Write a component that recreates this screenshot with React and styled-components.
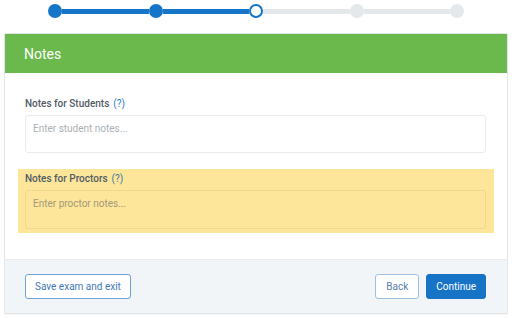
import React from "react";
import styled, { createGlobalStyle } from "styled-components";

const Global = createGlobalStyle`
  html, body { margin: 0; padding: 0; background: #ffffff; }
  body { font-family: Roboto, "Liberation Sans", Arial, sans-serif; }
  * { box-sizing: border-box; }
`;

const Page = styled.div`
  width: 512px;
  height: 318px;
  overflow: hidden;
  padding: 4px 4px 0 4px;
`;

const Stepper = styled.div`
  display: flex;
  align-items: center;
  margin: 0 0 0 44px;
  width: 416px;
  height: 14px;
`;

const Dot = styled.div`
  width: 14px;
  height: 14px;
  flex: none;
  border-radius: 50%;
  background: ${(p) => (p.$state === "done" ? "#1575c8" : p.$state === "current" ? "#ffffff" : "#e4e8eb")};
  border: ${(p) => (p.$state === "current" ? "2px solid #1575c8" : "none")};
`;

const Line = styled.div`
  flex: 1;
  height: 5px;
  background: ${(p) => (p.$done ? "#1575c8" : "#e4e8eb")};
`;

const Card = styled.div`
  margin-top: 15px;
  width: 504px;
  border: 1px solid #e3e6e8;
  border-radius: 2px;
  background: #fff;
  box-shadow: 0 1px 1px rgba(0, 0, 0, 0.04);
`;

const Header = styled.div`
  height: 39px;
  background: #6bb94c;
  color: #fff;
  font-size: 14px;
  display: flex;
  align-items: center;
  padding-left: 19px;
`;

const Body = styled.div`
  padding: 21px 21px 26px 20px;
  display: flex;
  flex-direction: column;
  gap: 12px;
`;

const FieldGroup = styled.div`
  margin: 0 -8px 0 -7px;
  padding: 3px 8px 4px 7px;
  background: ${(p) => (p.$highlight ? "#fde59a" : "transparent")};
  display: flex;
  flex-direction: column;
  gap: 4px;
`;

const Label = styled.div`
  font-size: 10px;
  line-height: 14px;
  font-weight: 500;
  color: #525c66;
`;

const Help = styled.span`
  color: ${(p) => (p.$dark ? "#3d7a9a" : "#2b7bc9")};
  margin-left: 4px;
  font-weight: 400;
`;

const Input = styled.div`
  height: ${(p) => p.$h}px;
  border: 1px solid ${(p) => (p.$highlight ? "#efd98c" : "#e9ebed")};
  border-radius: 3px;
  padding: 6px 7px;
  font-size: 10px;
  line-height: 14px;
  color: ${(p) => (p.$highlight ? "#a39a78" : "#aab0b5")};
`;

const Footer = styled.div`
  background: #f2f5f8;
  border-top: 1px solid #e8ebee;
  padding: 14px 21px 14px 20px;
  display: flex;
  align-items: center;
`;

const Spacer = styled.div`
  flex: 1;
`;

const Button = styled.button`
  height: 25px;
  padding: 0 ${(p) => p.$px}px;
  font-family: Roboto, "Liberation Sans", Arial, sans-serif;
  font-size: 10px;
  border-radius: 3px;
  margin-left: ${(p) => p.$ml || 0}px;
  cursor: pointer;
  background: ${(p) => (p.$primary ? "#1673c6" : "#ffffff")};
  color: ${(p) => (p.$primary ? "#ffffff" : p.$muted ? "#5a7ea6" : "#3f78b8")};
  border: 1px solid ${(p) => (p.$primary ? "#1673c6" : p.$muted ? "#9cc0e4" : "#6ea3da")};
`;

export default function App() {
  const steps = ["done", "done", "current", "todo", "todo"];
  return (
    <Page>
      <Global />
      <Stepper>
        {steps.map((s, i) => (
          <React.Fragment key={i}>
            {i > 0 && <Line $done={s !== "todo"} />}
            <Dot $state={s} />
          </React.Fragment>
        ))}
      </Stepper>
      <Card>
        <Header>Notes</Header>
        <Body>
          <FieldGroup>
            <Label>
              Notes for Students<Help>(?)</Help>
            </Label>
            <Input $h={38}>Enter student notes...</Input>
          </FieldGroup>
          <FieldGroup $highlight>
            <Label>
              Notes for Proctors<Help $dark>(?)</Help>
            </Label>
            <Input $h={39} $highlight>Enter proctor notes...</Input>
          </FieldGroup>
        </Body>
        <Footer>
          <Button $px={9}>Save exam and exit</Button>
          <Spacer />
          <Button $px={10} $muted>Back</Button>
          <Button $px={9} $ml={7} $primary>Continue</Button>
        </Footer>
      </Card>
    </Page>
  );
}
